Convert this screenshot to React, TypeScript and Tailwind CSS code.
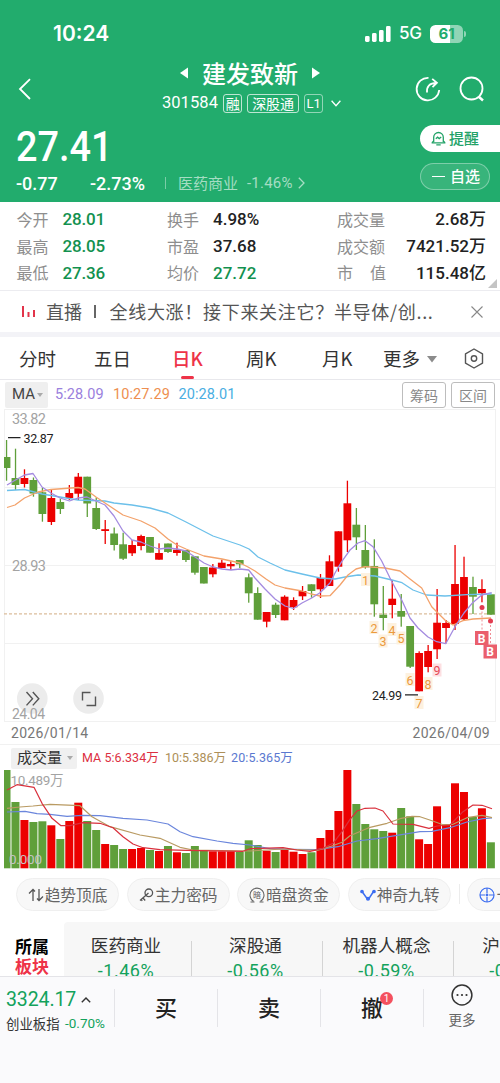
import React from "react";

// isRed, bodyTop, bodyBottom, wickTop, wickBottom
type Candle = [number, number, number, number, number];

const RED = "#ec0000";
const GREEN = "#5f9f3a";
const STEP = 8.97;
const START = 6.5;

const candles: Candle[] = [
  [0, 457, 468, 440, 480.7], [0, 478, 485, 448.7, 490], [1, 478, 484, 469.3, 487.5],
  [0, 480, 493.5, 477.5, 496.7], [0, 492.3, 514, 488, 521.7], [1, 498, 522, 490, 525],
  [0, 502, 509, 498.7, 514], [1, 493, 498, 485, 500], [1, 476.7, 493.7, 473, 500],
  [0, 476.7, 503.5, 476.7, 517], [0, 508, 529, 497.5, 530], [1, 529.2, 531, 520, 544],
  [0, 533.5, 545, 527.5, 550.5], [0, 544.3, 558.7, 532.7, 560], [1, 545, 553.3, 540, 556],
  [1, 536, 546, 534.7, 550.3], [0, 537, 552.7, 537, 552.7], [1, 553, 559.7, 543.3, 559.7],
  [0, 543.5, 552, 543.5, 553], [1, 549.7, 553, 542.7, 555.7], [0, 550, 560, 550, 562],
  [0, 556.3, 572.7, 556.3, 574.7], [0, 567, 583.5, 567, 583.5], [1, 567.5, 574.3, 564, 577.3],
  [1, 562.7, 568, 559.7, 568.3], [1, 564, 566.3, 561.3, 570], [0, 560, 564.3, 560, 568],
  [0, 577.3, 593.3, 573.5, 602.7], [0, 593, 619.7, 587.3, 619.7], [1, 612, 621.7, 612, 627.3],
  [0, 604.7, 615, 602.7, 618], [1, 596.7, 620.3, 595.3, 620.3], [1, 600, 607.3, 597.3, 610],
  [1, 591, 596.3, 586, 600], [0, 584.3, 591, 584.3, 597.7], [1, 578, 589.3, 574, 598],
  [1, 561.3, 586, 555.3, 586], [1, 531.3, 566.7, 531.3, 571.7], [1, 503.3, 540.3, 480.7, 552],
  [0, 524.7, 537.3, 508, 550], [0, 550, 567.3, 525, 568.7], [0, 566, 604.3, 539.3, 616.7],
  [0, 614.7, 618, 586, 630.3], [1, 598.7, 605, 580, 618.3], [0, 611, 616.7, 594, 626.7],
  [0, 626, 666.7, 626, 668], [1, 653, 691.3, 651.3, 691.3], [1, 651, 667, 645, 672.3],
  [1, 622.7, 649.3, 589, 659], [1, 623, 628, 620, 643.3], [1, 584, 624, 545, 630],
  [1, 577, 619.3, 556.7, 621], [0, 587, 596.7, 576.7, 614], [1, 589, 593.3, 579.3, 602.3],
  [0, 594.3, 614.7, 594.3, 614.7],
];

const volumes = [
  770, 802, 820, 822, 821.3, 825.3, 839, 821, 802.7, 821, 830, 844, 845, 849, 849, 848, 850, 851,
  846, 852.3, 853, 846, 850, 851.3, 851.3, 851.3, 852, 840.3, 845, 850.7, 852, 849.7, 851.7, 854,
  852.3, 838, 830, 811, 770, 804, 824, 829.3, 831, 832.7, 808, 816.3, 839.3, 844, 806.3, 825,
  783.3, 792, 817, 808.3, 842.3,
];

const priceLines = [
  {
    color: "#6cc0ea",
    points:
      "7,490.5 24.5,489.5 42,494 60,497 78,500 105,501 114,503 132,505 150,508 168,513 186,522 213,536 240,545 249,549 258,557 270,563 285,570 302,574 320,578 335,579 345,577 358,575 375,576 392,580 402,582.7 413,590 426.7,595 445,596 466.7,594.7 491.7,594",
  },
  {
    color: "#f3a26b",
    points:
      "7,507.5 15,505 24.5,498 38,492 51,489.5 78,487.5 85,489 96,497 105,503 114,509 123,515 141,521 155,528 168,539 177,545 186,549 204,556 222,559 240,563 248,567 255,571 266,579 275,585 285,588 302,591 311,594 320,596 330,595.7 340,585 348,575 356,569 365,566.7 385,568 400,571 410,579 421.7,588 431.7,606.7 445.7,620.7 453,625 463,620.7 473,619 491,618",
  },
  {
    color: "#a48be0",
    points:
      "7,485 15.5,480 24.5,475 33,473.5 42,487 51,493 60,498 69.5,501 78,498 87,497 96,501 105,505 114,516 123,531 132,540 141,542 150,546 159,549 168,548 177,549 186,551 195,557 204,563 213,567 222,569 231,570 240,569 248.7,570 255,578 265,589 275,599 285,606 293.5,608.5 302,603 311.7,598 320,592.7 330,583 335,573 341.7,561.7 350,550 358,543 365,540.7 373,546.7 381.7,561 390,578 401.7,600 410,618 418,628 428,637 436.7,641.7 445.7,643.7 455,626.7 464,613 472.7,602.7 481.7,595 491.7,592.7",
  },
];

const volumeLines = [
  {
    color: "#6b86dc",
    points:
      "7,812 25,811.3 37,813.7 50,814.3 67,816.3 82,815.3 100,815.7 123,818.3 147,820 168,824 180,831.7 193,836.7 217,841 233,843.3 250,845 270,848.7 290,849.3 317,849.7 338,846.7 357,841 377,838.7 397,835.3 420,831.7 432,831.3 450,827.7 467,822 483,818.7 492,818",
  },
  {
    color: "#b99a62",
    points:
      "7,808.3 20,807 33,806 50,804.3 80,805.7 92,816.7 110,826.7 140,835 160,838.3 180,847.3 193,850 250,851 283,849 317,850.3 330,846.7 342,842.3 350,835.7 370,827.3 387,823.3 400,818.7 412,816.3 420,816.7 432,820.7 443,824.7 453,824.3 467,817.7 482,815.3 492,817.7",
  },
  {
    color: "#d9303c",
    points:
      "7,790 17,784.7 34,787.3 42,803.3 52,818.3 61,825.7 70,825.7 83,822.7 100,823.3 113,827.7 123,836.7 133,844 143,847.7 160,849.7 187,850.3 243,851.3 250,848.7 283,847.7 297,850 310,851.3 323,848.3 333,843.3 342,831.7 350,819.3 357,811 365,808.3 375,808 383,811 393,824 413,824.3 429,828.3 437,826 450,825 463,811.7 473,805 482,805.3 492,808.7",
  },
];

const turns = [
  { n: 1, x: 365.5, y: 580 },
  { n: 2, x: 374, y: 628 },
  { n: 3, x: 383, y: 641.5 },
  { n: 4, x: 392, y: 630 },
  { n: 5, x: 401, y: 638.5 },
  { n: 6, x: 410, y: 680 },
  { n: 7, x: 419, y: 703 },
  { n: 8, x: 428, y: 684 },
  { n: 9, x: 437, y: 670.5 },
];

const stats = [
  ["今开", "28.01", "换手", "4.98%", "成交量", "2.68万"],
  ["最高", "28.05", "市盈", "37.68", "成交额", "7421.52万"],
  ["最低", "27.36", "均价", "27.72", "市值", "115.48亿"],
];

const sectors = [
  { name: "医药商业", change: "-1.46%" },
  { name: "深股通", change: "-0.56%" },
  { name: "机器人概念", change: "-0.59%" },
  { name: "沪深股通", change: "-0.61%" },
];

const StatusBar = () => (
  <div className="h-[52px] flex items-start justify-between pt-[20px] pl-[53px] pr-[34px]">
    <span className="font-['Inter'] text-[21px] leading-[28px] font-semibold">10:24</span>
    <div className="flex items-center h-[27px]">
      <svg width="26" height="16" viewBox="0 0 26 16" fill="white">
        <rect x="0" y="10" width="4.6" height="6" rx="1.4" />
        <rect x="7" y="7" width="4.6" height="9" rx="1.4" />
        <rect x="14" y="4" width="4.6" height="12" rx="1.4" />
        <rect x="21" y="0" width="4.6" height="16" rx="1.4" />
      </svg>
      <span className="font-['Inter'] text-[17px] font-medium ml-[8px] w-[31px] tracking-[-0.3px]">5G</span>
      <div className="w-[33px] h-[18px] rounded-[5.5px] bg-[linear-gradient(90deg,#fff_61%,#90d5b6_61%)] text-center font-['Inter'] text-[15px] leading-[18px] font-bold text-[#22ac6d]">
        61
      </div>
      <div className="w-[2px] h-[6px] ml-[1px] rounded-r-full bg-[#90d5b6]" />
    </div>
  </div>
);

const Header = () => (
  <header className="h-[202px] bg-[#22ac6d] text-white">
    <StatusBar />
    <div className="h-[70px] flex justify-between">
      <div className="w-[100px] pl-[18px] pt-[26px]">
        <svg width="14" height="22" viewBox="0 0 14 22" fill="none" stroke="white" strokeWidth="1.8">
          <path d="M12 1.2 2 11l10 10" />
        </svg>
      </div>
      <div className="flex flex-col items-center w-[300px]">
        <div className="flex items-center h-[42px] gap-[14px]">
          <svg width="8" height="12">
            <path d="M8 .5v11L0 6z" fill="white" />
          </svg>
          <h1 className="text-[24px] font-medium">建发致新</h1>
          <svg width="8" height="12">
            <path d="M0 .5v11L8 6z" fill="white" />
          </svg>
        </div>
        <div className="flex items-center h-[18px] gap-[5px] pl-[3px] text-[14px]">
          <span className="font-['Roboto'] text-[16.5px] tracking-[0.1px]">301584</span>
          <span className="border border-white/70 rounded-[3px] w-[19px] h-[19px] leading-[17px] text-center">融</span>
          <span className="border border-white/70 rounded-[3px] w-[52px] h-[19px] leading-[17px] text-center">深股通</span>
          <span className="border border-white/50 rounded-[3px] w-[19px] h-[19px] leading-[17px] text-center font-['Roboto'] text-[13px]">
            L1
          </span>
          <svg className="ml-[3px]" width="10" height="7" viewBox="0 0 10 7" fill="none" stroke="white" strokeWidth="1.3">
            <path d="m.6.8 4.4 5 4.4-5" />
          </svg>
        </div>
      </div>
      <div className="w-[100px] flex gap-[18px] pl-[15px] pt-[24px]">
        <svg width="26" height="26" viewBox="0 0 26 26" fill="none" stroke="white" strokeWidth="1.8">
          <path d="M13.5 1.8A11.3 11.3 0 1 0 24.2 14" />
          <path d="M12 16.5c-.6-6 2.4-9.400 9.600-9.500M17.200 2.900l4.700 4-4.400 4.200" />
        </svg>
        <svg width="26" height="26" viewBox="0 0 26 26" fill="none" stroke="white" strokeWidth="1.8">
          <circle cx="12.5" cy="12.5" r="11" />
          <path d="m19.5 20.5 4.5 4" strokeWidth="2.4" />
        </svg>
      </div>
    </div>
    <div className="flex justify-between h-[80px]">
      <div className="pl-[16px] font-['Roboto']">
        <div className="text-[43px] leading-[48px] font-medium w-max origin-left scale-x-[0.88]">27.41</div>
        <div className="flex items-center h-[26px]">
          <span className="w-[74px] text-[18px] font-medium">-0.77</span>
          <span className="w-[75px] text-[18px] font-medium">-2.73%</span>
          <span className="w-px h-[12px] bg-white/40" />
          <span className="font-['Noto_Sans_CJK_SC'] text-[15px] text-white/60 ml-[12px]">医药商业</span>
          <span className="text-[15px] text-white/60 ml-[9px] tracking-[0.2px]">-1.46%</span>
          <svg className="ml-[5px]" width="7" height="12" viewBox="0 0 7 12" fill="none" stroke="white" strokeOpacity="0.6" strokeWidth="1.3">
            <path d="m.8.8 5.2 5.2L.8 11.2" />
          </svg>
        </div>
      </div>
      <div className="w-[80px] pt-[3px]">
        <button className="w-full h-[27px] rounded-l-full bg-white text-[#22a267] flex items-center pl-[11px] gap-[3px] text-[15px] font-medium">
          <svg width="15" height="15" viewBox="0 0 15 15" fill="none" stroke="currentColor" strokeWidth="1.3">
            <path d="M2.7 11V6.3a4.8 4.8 0 0 1 9.6 0V11M.6 11.8h13.8M1 11.6l1.7-1.7M14 11.6l-1.7-1.7" />
            <path d="M5.3 13.8h4.4M4.8 7.800l1.800-1.600 1.600 1.400 2-1.600" />
          </svg>
          提醒
        </button>
        <button className="w-[70px] h-[27px] mt-[11px] rounded-full border border-white/35 bg-white/10 flex items-center pl-[11px] gap-[5px] text-[15px] font-medium">
          <span className="w-[13px] h-[1.5px] bg-white" />
          自选
        </button>
      </div>
    </div>
  </header>
);

const Stats = () => (
  <section className="relative h-[89px] pt-[4px] border-b border-[#ececf0]">
    {stats.map((row, i) => (
      <div key={row[0]} className="flex items-center h-[26.7px] pl-[16.5px] pr-[14px] text-[16px] leading-[24px] text-[#8e8e8e]">
        <span className="w-[46px] pb-px">{row[0]}</span>
        <span className="w-[104.5px] font-['Roboto'] font-medium text-[17px] tracking-[-0.2px] text-[#13914f]">{row[1]}</span>
        <span className="w-[46px] pb-px">{row[2]}</span>
        <span
          className={`w-[124px] font-['Roboto'] font-medium text-[17px] ${
            i === 2 ? "text-[#13914f]" : "text-[#222]"
          }`}
        >
          {row[3]}
        </span>
        {i === 2 ? (
          <span className="w-[49px] pb-px flex justify-between">
            <span>市</span>
            <span>值</span>
          </span>
        ) : (
          <span className="w-[49px] pb-px">{row[4]}</span>
        )}
        <span className="flex-1 text-right font-['Roboto','Noto_Sans_CJK_SC'] font-medium text-[17px] text-[#222]">{row[5]}</span>
      </div>
    ))}
    <svg className="absolute right-[3px] bottom-[2px]" width="9" height="9">
      <path d="M9 0v9H0z" fill="#c4c4c4" />
    </svg>
  </section>
);

const News = () => (
  <section className="h-[46px] border-b-[5px] border-[#f3f3f7] flex items-center text-[18px] text-[#555] whitespace-nowrap">
    <svg className="ml-[21px]" width="15" height="12" fill="#e2344a">
      <rect x="1" y="0" width="2" height="11" />
      <rect x="6.5" y="6" width="2" height="5" />
      <rect x="12" y="4" width="2" height="7" />
    </svg>
    <span className="ml-[10px]">直播</span>
    <span className="w-[1.5px] h-[13px] bg-[#666] ml-[12px] mr-[14px]" />
    <span className="tracking-[0.7px] w-[331px]">全线大涨！接下来关注它？半导体/创...</span>
    <svg className="ml-[30px]" width="12" height="12" viewBox="0 0 12 12" stroke="#888" strokeWidth="1.1">
      <path d="m.5.5 11 11M11.5.5l-11 11" />
    </svg>
  </section>
);

const Tabs = () => (
  <nav className="h-[43px] border-b border-[#e8e8ec] flex text-[18.5px] leading-[42px] text-[#333] whitespace-nowrap">
    <span className="ml-[19px] w-[75px]">分时</span>
    <span className="w-[78px]">五日</span>
    <span className="w-[74px] text-[#ee3348] font-medium">
      日K
      <span className="block w-[13px] h-[3px] ml-[9px] -mt-[3px] rounded-full bg-[#ee3348]" />
    </span>
    <span className="w-[76px]">周K</span>
    <span className="w-[61px]">月K</span>
    <span className="w-[44px]">更多</span>
    <svg className="mt-[19px]" width="10" height="7">
      <path d="M0 0h10L5 6.5z" fill="#8b8b8b" />
    </svg>
    <svg className="ml-[27px] mt-[11px]" width="20" height="21" viewBox="0 0 20 21" fill="none" stroke="#555" strokeWidth="1.4">
      <path d="M10 1 18.5 5.8v9.4L10 20l-8.5-4.800V5.800z" strokeLinejoin="round" />
      <circle cx="10" cy="10.5" r="2.7" />
    </svg>
  </nav>
);

const ChartToolbar = () => (
  <div className="h-[29px] flex items-center px-[5px] font-['Roboto'] text-[14.5px]">
    <span className="w-[43px] h-[26px] bg-[#efefef] rounded-[2px] flex items-center pl-[7px] text-[15px] text-[#444]">
      MA
      <svg className="ml-[2px]" width="6" height="4">
        <path d="M0 0h6L3 4z" fill="#aaa" />
      </svg>
    </span>
    <span className="ml-[7px] w-[58px] text-[#9a80dd] tracking-[0.1px]">5:28.09</span>
    <span className="w-[65.5px] text-[#ee8f50] tracking-[0.1px]">10:27.29</span>
    <span className="flex-1 text-[#49aee2] tracking-[0.1px]">20:28.01</span>
    <button className="w-[44px] h-[26px] border border-[#bdbdbd] rounded-[3px] font-['Noto_Sans_CJK_SC'] text-[14px] leading-[24px] text-[#888]">
      筹码
    </button>
    <button className="w-[44px] h-[26px] ml-[5px] border border-[#bdbdbd] rounded-[3px] font-['Noto_Sans_CJK_SC'] text-[14px] leading-[24px] text-[#888]">
      区间
    </button>
  </div>
);

const BuyMark = ({ x, dot, top }: { x: number; dot: number; top: number }) => (
  <g>
    <path d={`M${x} ${dot}V${top}`} stroke="#f08c95" strokeDasharray="2 2" />
    <circle cx={x} cy={dot} r="2.5" fill="#e23c50" />
    <rect x={x - 7} y={top} width="13.5" height="14" fill="#ea5f6c" />
    <text x={x - 0.3} y={top + 11.5} fontSize="12" fontWeight="700" fill="white" textAnchor="middle">
      B
    </text>
  </g>
);

const KLine = () => (
  <svg className="block font-['Roboto']" width="500" height="313" viewBox="0 409 500 313">
    <path
      d="M4.5 409.5H495.5M4.5 487.5H495.5M4.5 565.5H495.5M4.5 643.5H495.5M4.5 721.5H495.5M4.5 409V722M495.5 409V722"
      stroke="#f1f1f1"
      fill="none"
    />
    <g fontSize="14.5" fill="#a3a3a3">
      <text x="12" y="424" textLength="34">33.82</text>
      <text x="12" y="571" textLength="34">28.93</text>
    </g>
    <path d="M4 613.8H495" stroke="#dcbd9c" strokeWidth="1.2" strokeDasharray="3 2" />
    {candles.map(([red, top, bottom, high, low], i) => {
      const x = START + i * STEP;
      const left = Math.max(x - 3.9, 4);
      return (
        <g key={i} fill={red ? RED : GREEN}>
          <rect x={x - 0.6} y={high} width="1.3" height={low - high} />
          <rect x={left} y={top} width={x + 3.9 - left} height={bottom - top} />
        </g>
      );
    })}
    {priceLines.map((l) => (
      <polyline key={l.color} points={l.points} fill="none" stroke={l.color} strokeWidth="1.3" strokeLinejoin="round" />
    ))}
    {turns.map(({ n, x, y }) => (
      <g key={n}>
        <rect x={x - 4.5} y={y - 7} width="9" height="13" fill={n === 9 ? "#fddfe1" : "#fdf1df"} />
        <text x={x} y={y + 4.5} fontSize="12.5" textAnchor="middle" fill={n === 9 ? "#e64a58" : "#eb9a3c"}>
          {n}
        </text>
      </g>
    ))}
    <BuyMark x={482} dot={607.5} top={631} />
    <BuyMark x={490.5} dot={621} top={644.5} />
    <path d="M8 437.6h12.5M405 694.8h13" stroke="#222" strokeWidth="1.3" />
    <g fontSize="12.5" fill="#222">
      <text x="23.5" y="442.5" textLength="30">32.87</text>
      <text x="372" y="699.5" textLength="30">24.99</text>
    </g>
    <circle cx="32.3" cy="698.5" r="15.3" fill="#ececec" />
    <circle cx="88.5" cy="698.5" r="15.3" fill="#ececec" />
    <path
      d="m26.5 692 6 6.700-6 6.700M32.800 692l6 6.700-6 6.700M82.500 700.500v-8h8M95.500 696.500v9h-9"
      fill="none"
      stroke="#555"
      strokeWidth="1.4"
    />
    <text x="12" y="719" fontSize="14" fill="#a3a3a3" textLength="33">24.04</text>
  </svg>
);

const Volume = () => (
  <section>
    <div className="h-[25px] flex items-center pt-px pl-[11px] font-['Roboto','Noto_Sans_CJK_SC'] text-[12.5px] whitespace-nowrap">
      <span className="w-[66px] h-[21px] bg-[#f0f0f0] rounded-[2px] flex items-center pl-[6px] text-[15px] text-[#333]">
        成交量
        <svg className="ml-[5px]" width="6" height="4">
          <path d="M0 0h6L3 4z" fill="#aaa" />
        </svg>
      </span>
      <span className="ml-[5px] w-[83px] text-[#dc2f42] tracking-[0.05px]">MA 5:6.334万</span>
      <span className="w-[66px] text-[#ad8f58]">10:5.386万</span>
      <span className="text-[#5a78d0] tracking-[0.1px]">20:5.365万</span>
    </div>
    <svg className="block font-['Roboto','Noto_Sans_CJK_SC']" width="500" height="99" viewBox="0 770 500 99">
      {volumes.map((top, i) => {
        const x = START + i * STEP;
        const left = Math.max(x - 4, 4);
        return (
          <rect key={i} x={left} y={top} width={x + 4 - left} height={868.3 - top} fill={candles[i][0] ? RED : GREEN} />
        );
      })}
      <text x="10.5" y="785" fontSize="13.5" fill="#a3a3a3" textLength="53">10.489万</text>
      <text x="9" y="864" fontSize="13.5" fill="#c4c4c4" textLength="33">0.000</text>
      {volumeLines.map((l) => (
        <polyline key={l.color} points={l.points} fill="none" stroke={l.color} strokeWidth="1.2" strokeLinejoin="round" />
      ))}
    </svg>
  </section>
);

const Pill = ({ label, children }: { label: string; children: React.ReactNode }) => (
  <button className="shrink-0 w-[103px] h-[33px] rounded-full border border-[#efefef] bg-[#f8f8f8] flex items-center justify-center gap-px text-[15.7px] text-[#666] whitespace-nowrap">
    {children}
    {label}
  </button>
);

const Tools = () => (
  <section className="h-[53px] pt-[9px] pl-[16px] flex gap-[7.7px] overflow-hidden">
    <Pill label="趋势顶底">
      <svg width="16" height="14" viewBox="0 0 16 14" fill="none" stroke="#555" strokeWidth="1.3">
        <path d="M5 13V1.5M1 5.5l4-4 2 2M11 1v11.5M15 8.5l-4 4-2-2" />
      </svg>
    </Pill>
    <Pill label="主力密码">
      <svg width="15" height="14" viewBox="0 0 15 14" fill="none" stroke="#555" strokeWidth="1.3">
        <circle cx="9.8" cy="4.8" r="3.8" />
        <path d="M9.5 5 1 12.5M4 10l2.2 2.5M2.2 11.5l1 1.5" />
      </svg>
    </Pill>
    <Pill label="暗盘资金">
      <svg width="16" height="16" viewBox="0 0 16 16" fill="none" stroke="#666" strokeWidth="1.1">
        <path d="M4.5 14.2a7 7 0 1 1 7 0M1.5 15h4M10.5 15h4" />
        <text x="8" y="11" fontSize="8" textAnchor="middle" fill="#555" stroke="none">暗</text>
      </svg>
    </Pill>
    <Pill label="神奇九转">
      <svg width="16" height="12" viewBox="0 0 16 12" fill="#3c6df0" stroke="#3c6df0" strokeWidth="1.5">
        <path d="M2 2.5 7 9.5h2l4.5-7" fill="none" />
        <circle cx="2" cy="2.5" r="1.1" />
        <circle cx="8" cy="9.7" r="1.3" />
        <circle cx="14" cy="2.5" r="1.1" />
      </svg>
    </Pill>
    <span className="shrink-0 w-px h-[20px] mt-[6px] bg-[#ececec]" />
    <button className="shrink-0 w-[103px] h-[33px] rounded-full border border-[#efefef] bg-[#f8f8f8] flex items-center pl-[11px] gap-px text-[15.7px] text-[#666]">
      <svg className="shrink-0" width="16" height="16" viewBox="0 0 16 16" fill="none" stroke="#3c6df0" strokeWidth="1.2">
        <circle cx="8" cy="8" r="7" />
        <path d="M8 1v5M8 10v5M1 8h5M10 8h5" />
        <circle cx="8" cy="8" r=".8" fill="#3c6df0" />
      </svg>
      十字星
    </button>
  </section>
);

const Sectors = () => (
  <section className="h-[54px] flex overflow-hidden">
    <div className="w-[64px] shrink-0 pt-[14px] pl-[15px] text-[17px] leading-[20px] font-bold">
      <div className="text-black">所属</div>
      <div className="text-[#ee3348]">板块</div>
    </div>
    <div className="flex bg-[#f7f7f7] rounded-tl-[4px]">
      {sectors.map((s, i) => (
        <div key={s.name} className={`shrink-0 flex ${i === 0 ? "w-[128px]" : "w-[131px]"}`}>
          <div className="flex-1 text-center pr-[3px]">
            <div className="pt-[10px] text-[17.6px] leading-[26px] text-[#333]">{s.name}</div>
            <div className="font-['Roboto'] text-[18px] leading-[25px] tracking-[0.5px] text-[#13a25c]">{s.change}</div>
          </div>
          <span className="w-px h-[40px] mt-[19px] bg-[#d4d4d4]" />
        </div>
      ))}
    </div>
  </section>
);

const BottomBar = () => (
  <footer className="h-[107px] bg-[#fafafc] border-t border-[#e4e4e8] flex text-[#222]">
    <div className="w-[114px] pl-[6px] pt-[10px]">
      <div className="flex items-center h-[26px] font-['Roboto'] text-[19.5px] text-[#13a25c]">
        <span className="w-[75px] tracking-[-0.1px]">3324.17</span>
        <svg width="10" height="6" viewBox="0 0 10 6" fill="none" stroke="#333" strokeWidth="1.4">
          <path d="M.8 5.3 5 1l4.2 4.3" />
        </svg>
      </div>
      <div className="flex items-center h-[21px] whitespace-nowrap text-[13.4px]">
        <span className="w-[59px] text-[#333]">创业板指</span>
        <span className="font-['Roboto'] text-[13.5px] text-[#13a25c]">-0.70%</span>
      </div>
    </div>
    {["买", "卖", "撤"].map((label) => (
      <button key={label} className="w-[103px] flex">
        <span className="w-px h-[38px] mt-[12px] bg-[#e4e4e8]" />
        <span className="flex-1 relative text-[22px] leading-[59px] font-medium">
          {label}
          {label === "撤" && (
            <span className="absolute left-[59px] top-[15px] w-[13px] h-[13px] rounded-full bg-[#f4505f] font-['Roboto'] text-[10px] leading-[13px] font-normal text-white">
              1
            </span>
          )}
        </span>
      </button>
    ))}
    <button className="flex-1 flex">
      <span className="w-px h-[38px] mt-[12px] bg-[#e4e4e8]" />
      <span className="flex-1 flex flex-col items-center pt-[7px] text-[13.5px] leading-[26px] text-[#666]">
        <svg width="22" height="22" viewBox="0 0 22 22">
          <circle cx="11" cy="11" r="9.9" fill="none" stroke="#333" strokeWidth="1.5" />
          <circle cx="6.5" cy="11" r="1.1" fill="#333" />
          <circle cx="11" cy="11" r="1.1" fill="#333" />
          <circle cx="15.5" cy="11" r="1.1" fill="#333" />
        </svg>
        更多
      </span>
    </button>
  </footer>
);

const App = () => {
  return (
    <div className="w-[500px] h-[1083px] overflow-hidden bg-white font-['Noto_Sans_CJK_SC',sans-serif]">
      <Header />
      <Stats />
      <News />
      <Tabs />
      <ChartToolbar />
      <KLine />
      <div className="h-[23px] flex items-center justify-between pl-[11px] pr-[10px] border-b border-[#f1f1f1] font-['Roboto'] text-[14px] tracking-[0.3px] text-[#777]">
        <span>2026/01/14</span>
        <span>2026/04/09</span>
      </div>
      <Volume />
      <Tools />
      <Sectors />
      <BottomBar />
    </div>
  );
};

export default App;
